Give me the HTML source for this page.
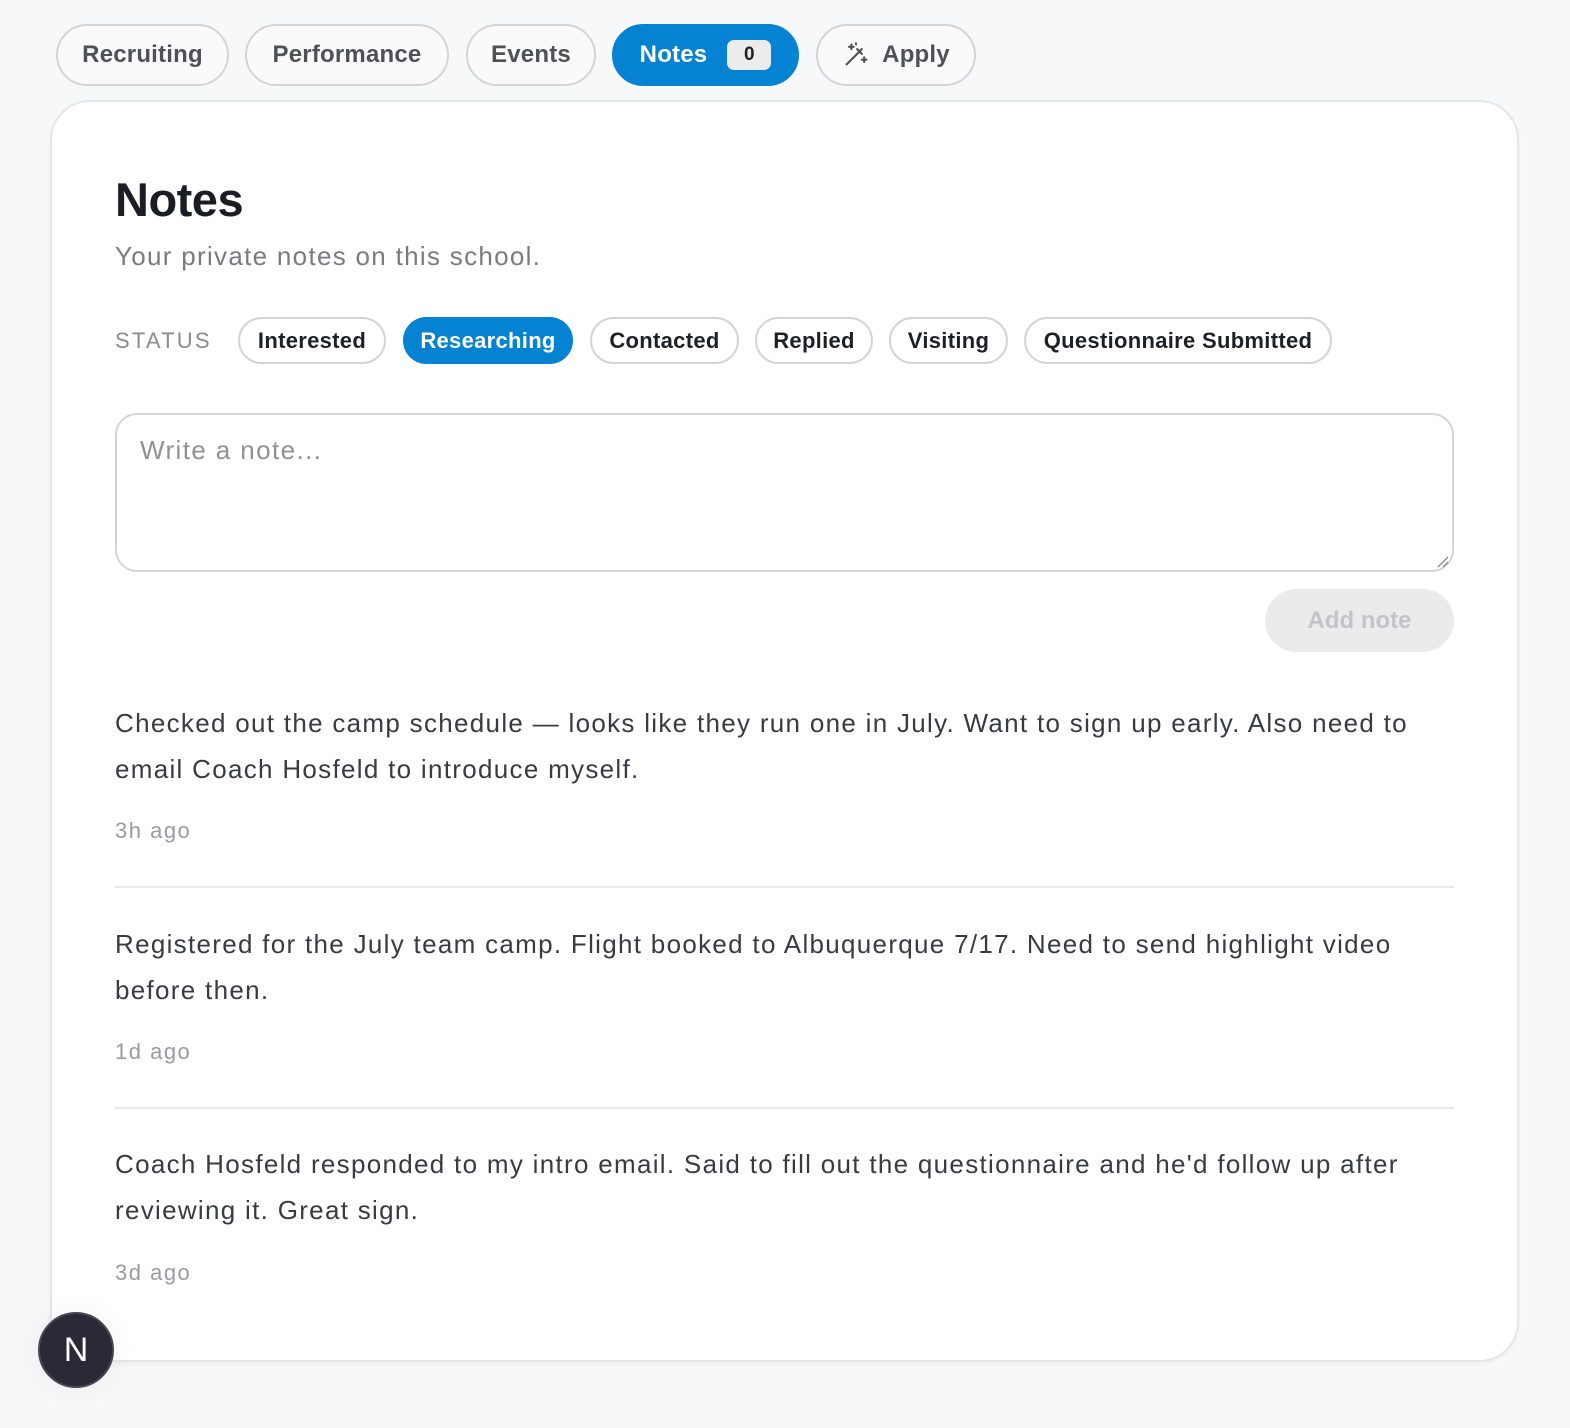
<!DOCTYPE html>
<html><head><meta charset="utf-8"><style>
*{box-sizing:border-box;margin:0;padding:0}
html,body{width:1570px;height:1428px;overflow:hidden}
body{background:#f7f8f9;font-family:"Liberation Sans",sans-serif;position:relative}
.tab{position:absolute;top:24px;height:62px;border:2px solid #d4d4d6;border-radius:31px;background:#fafafa;color:#505058;font-size:24px;font-weight:bold;display:flex;align-items:center;justify-content:center;letter-spacing:0.2px}
.tab.on{background:#0583d2;border-color:#0583d2;color:#fff}
.badge{background:#ececec;color:#222;border-radius:7px;font-size:19px;width:44px;height:30px;display:flex;align-items:center;justify-content:center;margin-left:20px}
.card{position:absolute;left:50px;top:100px;width:1469px;height:1262px;background:#fff;border:2px solid #e6e6e8;border-radius:40px;box-shadow:0 2px 4px rgba(0,0,0,0.04)}
.abs{position:absolute;white-space:nowrap}
h1{position:absolute;left:115px;top:172px;font-size:47px;font-weight:bold;color:#1c1c24;letter-spacing:-0.5px}
.sub{left:115px;top:241px;font-size:26px;color:#7a7a82;letter-spacing:1.3px}
.st{left:115px;top:328px;font-size:22px;color:#8a8a92;letter-spacing:2.2px}
.pill{position:absolute;top:317px;height:47px;border:2px solid #d4d4d6;border-radius:24px;color:#1f1f28;font-size:22px;font-weight:bold;display:flex;align-items:center;justify-content:center;letter-spacing:0.3px}
.pill.on{background:#0583d2;border-color:#0583d2;color:#fff}
.ta{left:115px;top:413px;width:1339px;height:159px;border:2px solid #d4d4d6;border-radius:22px}
.ph{left:140px;top:435px;font-size:26px;color:#909098;letter-spacing:1.4px}
.btn{left:1265px;top:589px;width:189px;height:63px;background:#ebebeb;border-radius:32px;color:#c4c4c8;font-size:24px;font-weight:bold;display:flex;align-items:center;justify-content:center}
.note{left:115px;font-size:26px;line-height:46px;color:#3a3a44;letter-spacing:1.3px}
.time{left:115px;font-size:22px;color:#9a9aa2;letter-spacing:1.5px}
.hr{left:115px;width:1339px;height:2px;background:#e8e8ea}
.n{left:38px;top:1312px;width:76px;height:76px;border-radius:50%;background:#2a2a36;border:2px solid #474756;color:#fff;font-size:34px;display:flex;align-items:center;justify-content:center;box-shadow:0 0 30px rgba(0,0,0,0.06)}
</style></head><body>
<div class="tab" style="left:56px;width:173px">Recruiting</div>
<div class="tab" style="left:245px;width:204px">Performance</div>
<div class="tab" style="left:466px;width:130px">Events</div>
<div class="tab on" style="left:612px;width:187px">Notes<span class="badge">0</span></div>
<div class="tab" style="left:816px;width:160px"><svg width="28" height="28" viewBox="0 0 24 24" fill="none" stroke="#505058" stroke-width="1.8" stroke-linecap="round" style="margin-right:12px"><path d="M4 20L15 9M13 7l4 4M15 9l2-2M8 3v4M6 5h4M19 14v4M17 16h4M12 2v1"/></svg>Apply</div>
<div class="card"></div>
<h1>Notes</h1>
<div class="abs sub">Your private notes on this school.</div>
<div class="abs st">STATUS</div>
<div class="pill" style="left:238px;width:148px">Interested</div>
<div class="pill on" style="left:403px;width:170px">Researching</div>
<div class="pill" style="left:590px;width:149px">Contacted</div>
<div class="pill" style="left:755px;width:118px">Replied</div>
<div class="pill" style="left:889px;width:119px">Visiting</div>
<div class="pill" style="left:1024px;width:308px">Questionnaire Submitted</div>
<div class="abs ta"></div>
<div class="abs ph">Write a note...</div>
<svg class="abs" style="left:1436px;top:555px" width="14" height="14"><path d="M2 12L12 2M7 12L12 7" stroke="#888" stroke-width="1.3"/></svg>
<div class="abs btn">Add note</div>
<div class="abs note" style="top:700px">Checked out the camp schedule — looks like they run one in July. Want to sign up early. Also need to<br>email Coach Hosfeld to introduce myself.</div>
<div class="abs time" style="top:818px">3h ago</div>
<div class="abs hr" style="top:886px"></div>
<div class="abs note" style="top:921px">Registered for the July team camp. Flight booked to Albuquerque 7/17. Need to send highlight video<br>before then.</div>
<div class="abs time" style="top:1039px">1d ago</div>
<div class="abs hr" style="top:1107px"></div>
<div class="abs note" style="top:1141px">Coach Hosfeld responded to my intro email. Said to fill out the questionnaire and he'd follow up after<br>reviewing it. Great sign.</div>
<div class="abs time" style="top:1260px">3d ago</div>
<div class="abs n">N</div>
</body></html>
